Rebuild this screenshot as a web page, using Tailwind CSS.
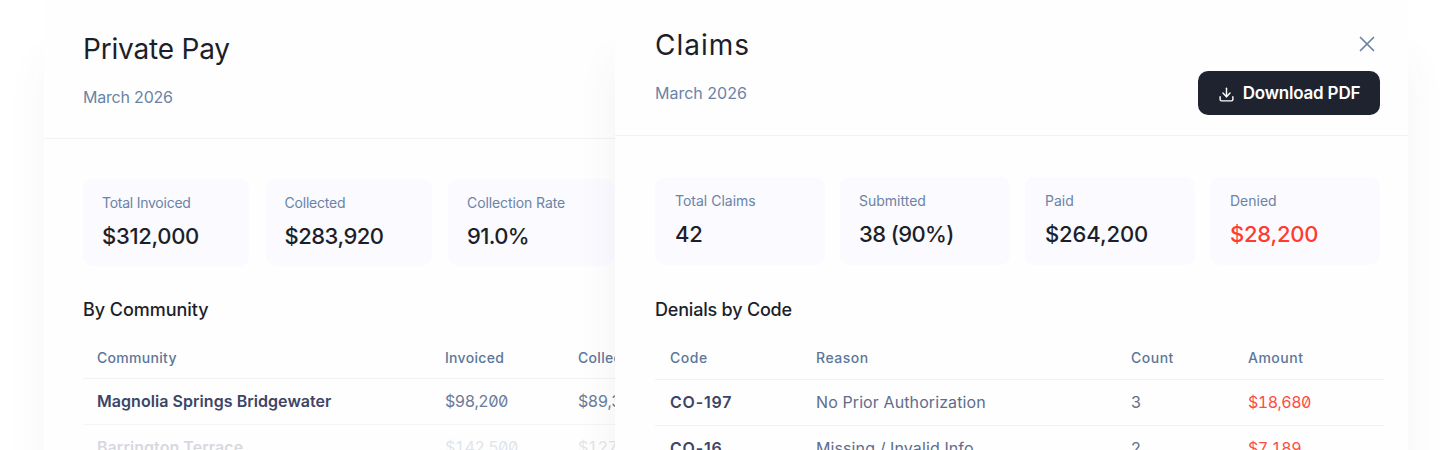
<!DOCTYPE html>
<html lang="en">
<head>
<meta charset="utf-8">
<title>Reports</title>
<script src="https://cdn.jsdelivr.net/npm/@tailwindcss/browser@4"></script>
</head>
<body class="bg-white">
<div class="relative h-[450px] w-[1452px] overflow-hidden bg-white font-['Inter',sans-serif] text-[#1c1f2a]">

  <!-- Private Pay window, sits behind -->
  <section class="absolute left-[44px] top-0 h-[450px] w-[793px] bg-[#fefefe] shadow-[0_60px_40px_rgba(60,70,110,0.05)]">
    <header class="h-[139px] border-b border-[#f1f2f6] pl-[39px] pt-[32px]">
      <h2 class="text-[28px] leading-[34px] font-normal tracking-[-0.2px]">Private Pay</h2>
      <p class="mt-[20px] text-[16px] leading-[22px] tracking-[-0.2px] text-[#6b83a6]">March 2026</p>
    </header>
    <div class="pl-[39px] pt-[40px]">
      <div class="flex gap-[16.5px]">
        <div class="h-[87px] w-[166px] rounded-[10px] bg-[#fafaff] pl-[19px] pt-[15px]">
          <p class="text-[14px] leading-[18px] tracking-[-0.25px] text-[#6b83a6]">Total Invoiced</p>
          <p class="mt-[9px] text-[22px] leading-[30px] font-medium tracking-[-0.3px]">$312,000</p>
        </div>
        <div class="h-[87px] w-[166px] rounded-[10px] bg-[#fafaff] pl-[19px] pt-[15px]">
          <p class="text-[14px] leading-[18px] tracking-[-0.2px] text-[#6b83a6]">Collected</p>
          <p class="mt-[9px] text-[22px] leading-[30px] font-medium tracking-[-0.5px]">$283,920</p>
        </div>
        <div class="h-[87px] w-[166px] rounded-[10px] bg-[#fafaff] pl-[19px] pt-[15px]">
          <p class="text-[14px] leading-[18px] tracking-[-0.1px] text-[#6b83a6]">Collection Rate</p>
          <p class="mt-[9px] text-[22px] leading-[30px] font-medium tracking-[-0.6px]">91.0%</p>
        </div>
      </div>
      <h3 class="mt-[32px] text-[18px] leading-[24px] font-medium tracking-[-0.05px]">By Community</h3>
      <table class="mt-[16px] w-[560px] table-fixed border-collapse text-left">
        <thead>
          <tr class="h-[40px] border-b border-[#f1f2f6] text-[14px] tracking-[0.3px] text-[#5c7699]">
            <th class="w-[362px] pl-[14px] font-medium">Community</th>
            <th class="w-[133px] font-medium">Invoiced</th>
            <th class="font-medium">Collected</th>
          </tr>
        </thead>
        <tbody class="text-[16px]">
          <tr class="h-[46px] border-b border-[#f4f5f8]">
            <td class="pl-[14px] font-semibold tracking-[0.05px] text-[#3d4566]">Magnolia Springs Bridgewater</td>
            <td class="text-[#6b7a96] slashed-zero tabular-nums tracking-[-0.5px]">$98,200</td>
            <td class="text-[#6b7a96] slashed-zero tabular-nums tracking-[-0.5px]">$89,340</td>
          </tr>
          <tr class="h-[46px] opacity-20">
            <td class="pl-[14px] font-semibold tracking-[0.05px] text-[#3d4566]">Barrington Terrace</td>
            <td class="text-[#6b7a96] slashed-zero tabular-nums tracking-[-0.5px]">$142,500</td>
            <td class="text-[#6b7a96] slashed-zero tabular-nums tracking-[-0.5px]">$127,800</td>
          </tr>
        </tbody>
      </table>
    </div>
  </section>

  <!-- Claims window, on top -->
  <section class="absolute left-[615px] top-0 h-[450px] w-[793px] bg-[#fefefe] shadow-[0_60px_40px_rgba(60,70,110,0.06)]">
    <header class="relative h-[136px] border-b border-[#f1f2f6] pl-[40px] pt-[28px]">
      <h2 class="text-[28px] leading-[34px] font-normal tracking-[1px]">Claims</h2>
      <p class="mt-[20px] text-[16px] leading-[22px] text-[#6b83a6]">March 2026</p>
      <button class="absolute right-[28px] top-[71px] flex h-[44px] w-[182px] items-center justify-center gap-[8px] rounded-[10px] bg-[#1f2330] pt-[2px] text-[17px] font-semibold tracking-[-0.2px] text-white">
        <svg class="h-[17px] w-[17px]" viewBox="0 0 24 24" fill="none" stroke="currentColor" stroke-width="2" stroke-linecap="round" stroke-linejoin="round"><path d="M12 3v12"/><path d="m7 10 5 5 5-5"/><path d="M3 15v4a2 2 0 0 0 2 2h14a2 2 0 0 0 2-2v-4"/></svg>
        Download PDF
      </button>
      <svg class="absolute right-[31px] top-[34px] h-[20px] w-[20px] text-[#6b83a6]" viewBox="0 0 20 20" fill="none" stroke="currentColor" stroke-width="1.7" stroke-linecap="round"><path d="M3.5 3.5l13 13"/><path d="M16.5 3.5l-13 13"/></svg>
    </header>
    <div class="pl-[40px] pt-[41px]">
      <div class="flex gap-[15px]">
        <div class="h-[88px] w-[170px] rounded-[10px] bg-[#fafaff] pl-[20px] pt-[15px]">
          <p class="text-[14px] leading-[18px] text-[#6b83a6]">Total Claims</p>
          <p class="mt-[9px] text-[22px] leading-[30px] font-medium tracking-[-0.2px]">42</p>
        </div>
        <div class="h-[88px] w-[170px] rounded-[10px] bg-[#fafaff] pl-[19px] pt-[15px]">
          <p class="text-[14px] leading-[18px] text-[#6b83a6]">Submitted</p>
          <p class="mt-[9px] text-[22px] leading-[30px] font-medium tracking-[-0.6px]">38 (90%)</p>
        </div>
        <div class="h-[88px] w-[170px] rounded-[10px] bg-[#fafaff] pl-[20px] pt-[15px]">
          <p class="text-[14px] leading-[18px] text-[#6b83a6]">Paid</p>
          <p class="mt-[9px] text-[22px] leading-[30px] font-medium tracking-[-0.1px]">$264,200</p>
        </div>
        <div class="h-[88px] w-[170px] rounded-[10px] bg-[#fafaff] pl-[20px] pt-[15px]">
          <p class="text-[14px] leading-[18px] text-[#6b83a6]">Denied</p>
          <p class="mt-[9px] text-[22px] leading-[30px] font-medium tracking-[-0.2px] text-[#ff3b30]">$28,200</p>
        </div>
      </div>
      <h3 class="mt-[33px] text-[18px] leading-[24px] font-medium tracking-[-0.2px]">Denials by Code</h3>
      <table class="mt-[15px] w-[729px] table-fixed border-collapse text-left">
        <thead>
          <tr class="h-[42px] border-b border-[#f1f2f6] text-[14px] tracking-[0.5px] text-[#5c7699]">
            <th class="w-[161px] pl-[15px] font-medium">Code</th>
            <th class="w-[315px] font-medium">Reason</th>
            <th class="w-[117px] font-medium">Count</th>
            <th class="font-medium">Amount</th>
          </tr>
        </thead>
        <tbody class="text-[16px]">
          <tr class="h-[46px] border-b border-[#f1f2f6]">
            <td class="pl-[15px] font-semibold tracking-[0.8px] text-[#3d4566]">CO-197</td>
            <td class="text-[#5f6d8a] tracking-[0.1px]">No Prior Authorization</td>
            <td class="text-[#5f6d8a]">3</td>
            <td class="text-[#ff4d42] slashed-zero tabular-nums tracking-[-0.5px]">$18,680</td>
          </tr>
          <tr class="h-[46px]">
            <td class="pl-[15px] font-semibold tracking-[0.8px] text-[#3d4566]">CO-16</td>
            <td class="text-[#5f6d8a] tracking-[0.1px]">Missing / Invalid Info</td>
            <td class="text-[#5f6d8a]">2</td>
            <td class="text-[#ff4d42] slashed-zero tabular-nums tracking-[-0.5px]">$7,189</td>
          </tr>
        </tbody>
      </table>
    </div>
  </section>
</div>
</body>
</html>
